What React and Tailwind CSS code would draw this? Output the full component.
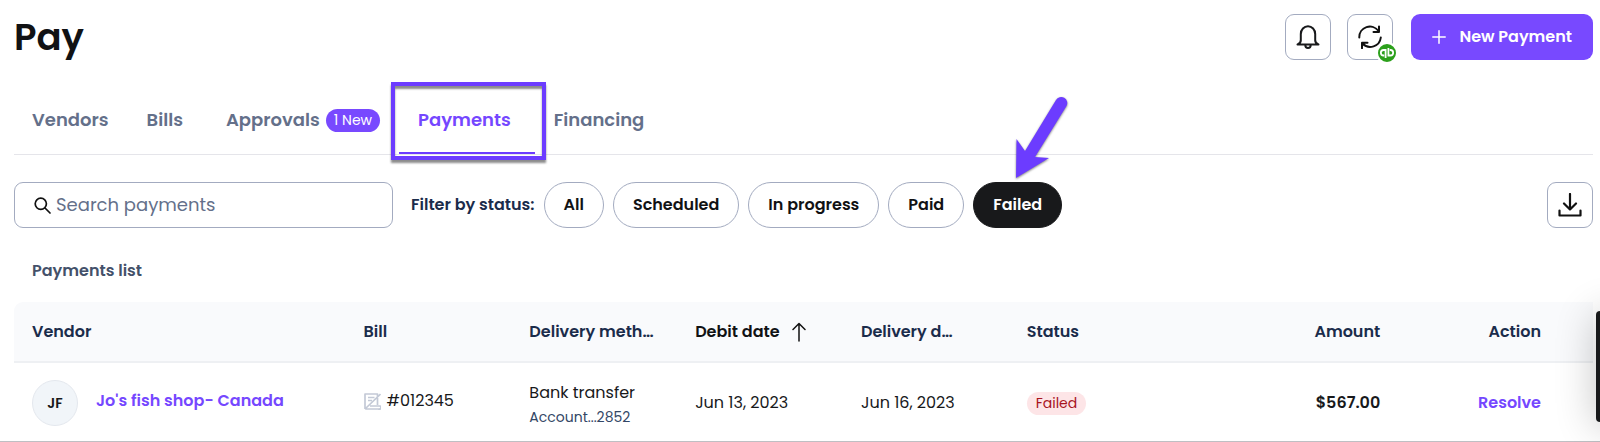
const TABS = [
  { label: 'Vendors', cls: 'pl-[18px] pr-[19px]' },
  { label: 'Bills', cls: 'px-[19px]' },
  { label: 'Approvals', badge: '1 New', cls: 'pl-[24px] pr-[19px]' },
  { label: 'Payments', active: true, cls: 'pl-[19px] pr-[24px]' },
  { label: 'Financing', cls: 'px-[19px]' }
];

const FILTERS = ['All', 'Scheduled', 'In progress', 'Paid', 'Failed'];

const PAYMENTS = [
  {
    initials: 'JF',
    vendor: "Jo's fish shop- Canada",
    bill: '#012345',
    method: 'Bank transfer',
    account: 'Account...2852',
    debit: 'Jun 13, 2023',
    delivery: 'Jun 16, 2023',
    status: 'Failed',
    amount: '$567.00'
  }
];

function BellIcon() {
  return (
    <svg viewBox="0 0 24 24" className="w-6 h-6" fill="none" stroke="#18191b" strokeWidth="2" strokeLinecap="round" strokeLinejoin="round">
      <path d="M1.500 19.500H22.500M4.800 16V9A7.200 7.700 0 0 1 19.200 9V16M4.800 15Q4.800 18.500 1.500 19.500M19.200 15Q19.200 18.500 22.500 19.500M9.300 20a2.700 3 0 0 0 5.400 0" />
    </svg>
  );
}

function SyncIcon() {
  return (
    <svg viewBox="0 0 24 24" className="w-6 h-6" fill="none" stroke="#111" strokeWidth="2" strokeLinecap="round" strokeLinejoin="round">
      <path d="M1.300 12.500A10.600 10.600 0 0 1 20.500 6M21 1.500V7H15.500M22.800 12.500A10.600 10.600 0 0 1 4.500 18.500M4 23.200V17.800H9.500" />
    </svg>
  );
}

function QuickbooksBadge() {
  return (
    <svg viewBox="0 0 22 22" className="absolute -right-[6px] -bottom-[5px] w-[22px] h-[22px]" fill="none" stroke="#fff" strokeWidth="1.800">
      <circle cx="11" cy="11" r="10" fill="#2ca01c" strokeWidth="2" />
      <path d="M9.600 16V8H7.600a2.700 2.700 0 0 0 0 5.500H8.200M12.400 6V13.500H14.400a2.700 2.700 0 0 0 0-5.500H13.800" />
    </svg>
  );
}

function PlusIcon() {
  return (
    <svg viewBox="0 0 14 14" className="w-[14px] h-[14px]" fill="none" stroke="#fff" strokeWidth="1.500" strokeLinecap="round">
      <path d="M7 0.800V13.200M0.800 7H13.200" />
    </svg>
  );
}

function SearchIcon() {
  return (
    <svg viewBox="0 0 17 17" className="w-[17px] h-[17px] shrink-0" fill="none" stroke="#111" strokeWidth="1.700" strokeLinecap="round">
      <circle cx="6.800" cy="6.800" r="5.600" />
      <path d="M11 11L16 16" />
    </svg>
  );
}

function DownloadIcon() {
  return (
    <svg viewBox="0 0 24 24" className="w-6 h-6" fill="none" stroke="#111" strokeWidth="2.200" strokeLinecap="round" strokeLinejoin="round">
      <path d="M12 1V16.500M6 10.500L12 16.500L18 10.500M1.500 17.500V22.500H22.500V17.500" />
    </svg>
  );
}

function NoBillIcon() {
  return (
    <svg viewBox="0 0 17 17" className="w-[17px] h-[17px] shrink-0" fill="none" stroke="#c3c9d6" strokeWidth="1.700" strokeLinejoin="round">
      <path d="M1 16V1H13.500V12M1 16H14.500A1.500 1.500 0 0 0 16 13H6M4 4.500H10.500M4 7.500H8M16.500 1L1 16" />
    </svg>
  );
}

function SortIcon() {
  return (
    <svg viewBox="0 0 14 20" className="w-[14px] h-[20px] shrink-0" fill="none" stroke="#111" strokeWidth="1.500" strokeLinecap="round" strokeLinejoin="round">
      <path d="M7 19V1.500M1 7.500L7 1.500L13 7.500" />
    </svg>
  );
}

function Pointer() {
  return (
    <svg viewBox="0 0 56 88" className="absolute left-[42px] -top-[90px] w-[56px] h-[88px] drop-shadow-[0_1px_1px_rgba(0,0,0,0.5)]" fill="#6c3cff">
      <path d="M1 86L1.500 47L10 59L41 8A6 6 0 0 1 51.500 14L20 65L34 66Z" />
    </svg>
  );
}

function Tab({ tab }) {
  return (
    <a href="#" className={`relative flex items-center h-[70px] pt-[2px] text-lg font-semibold ${tab.cls} ${tab.active ? 'text-[#7547ff]' : 'text-[#64708a]'}`}>
      {tab.label}
      {tab.badge && (
        <span className="ml-[6px] px-2 h-[23px] leading-[23px] rounded-full bg-[#7849ff] text-white text-sm font-normal">{tab.badge}</span>
      )}
      {tab.active && (
        <>
          <span className="absolute inset-x-0 bottom-0 h-[2px] bg-[#6c3cff]" />
          <span className="absolute -left-2 -right-[11px] -top-[2px] -bottom-[6px] border-4 border-[#6c3cff] shadow-[0_3px_2px_rgba(0,0,0,0.45),inset_0_3px_2px_rgba(0,0,0,0.45)]" />
        </>
      )}
    </a>
  );
}

function Row({ p }) {
  return (
    <tr className="h-[79px] text-base text-[#18191b] [&>td]:pt-[2px]">
      <td className="pl-[18px]">
        <div className="flex items-center">
          <span className="w-[46px] h-[46px] shrink-0 rounded-full border border-[#e4e8ee] bg-[#f1f5f9] flex items-center justify-center text-sm font-semibold">{p.initials}</span>
          <a href="#" className="ml-[18px] pb-1 font-semibold text-[#7547ff]">{p.vendor}</a>
        </div>
      </td>
      <td className="pl-[18px]">
        <div className="flex items-center gap-[6px] pb-1">
          <NoBillIcon />
          {p.bill}
        </div>
      </td>
      <td className="pl-[18px]">
        <div className="pt-1 leading-6">{p.method}</div>
        <div className="text-sm leading-6 text-[#334766]">{p.account}</div>
      </td>
      <td className="pl-[18px]">{p.debit}</td>
      <td className="pl-[18px]">{p.delivery}</td>
      <td className="pl-[18px]">
        <span className="inline-block px-[9px] leading-[23px] rounded-full bg-[#fde5e7] text-[#a8141e] text-sm">{p.status}</span>
      </td>
      <td className="pr-[18px] text-right font-semibold">{p.amount}</td>
      <td className="pr-[52px] text-right">
        <button type="button" className="font-semibold text-[#7547ff]">Resolve</button>
      </td>
    </tr>
  );
}

export default function App() {
  return (
    <div className="relative overflow-hidden bg-white font-[Poppins,Inter,sans-serif]">
      <main className="pl-[14px] pr-[7px]">
        <header className="flex items-center justify-between pt-[14px]">
          <h1 className="text-[37px] leading-[46px] font-semibold text-[#111214]">Pay</h1>
          <div className="flex items-center">
            <button type="button" aria-label="Notifications" className="w-[46px] h-[46px] flex items-center justify-center rounded-[9px] border border-[#a3abc0]">
              <BellIcon />
            </button>
            <button type="button" aria-label="Sync" className="relative ml-4 w-[46px] h-[46px] flex items-center justify-center rounded-[9px] border border-[#a3abc0]">
              <SyncIcon />
              <QuickbooksBadge />
            </button>
            <button type="button" className="ml-[18px] h-[46px] px-[21px] flex items-center gap-[13px] rounded-[9px] bg-[#7849ff] text-white text-base font-semibold">
              <PlusIcon />
              New Payment
            </button>
          </div>
        </header>

        <nav className="mt-[24px] flex border-b border-[#e5e5ea]">
          {TABS.map(t => <Tab key={t.label} tab={t} />)}
        </nav>

        {/* Search and status filters */}
        <div className="mt-[27px] flex items-center">
          <label className="w-[379px] h-[46px] flex items-center pl-[19px] gap-[5px] rounded-[9px] border border-[#a3abc0]">
            <SearchIcon />
            <input type="text" aria-label="Search payments" placeholder="Search payments" className="flex-1 min-w-0 outline-none text-lg placeholder:text-[#64708a]" />
          </label>
          <span className="ml-[18px] mr-[9px] text-base font-semibold text-[#1b2c4b]">Filter by status:</span>
          <div className="flex gap-[9px]">
            {FILTERS.map(f => (
              <div key={f} className="relative">
                <button
                  type="button"
                  className={`h-[46px] px-[19px] rounded-full border text-base font-semibold ${f === 'Failed' ? 'bg-[#18191b] border-[#18191b] text-white' : 'border-[#a3abc0] text-[#111214]'}`}
                >
                  {f}
                </button>
                {f === 'Failed' && <Pointer />}
              </div>
            ))}
          </div>
          <button type="button" aria-label="Download" className="ml-auto w-[46px] h-[46px] flex items-center justify-center rounded-[9px] border border-[#a3abc0]">
            <DownloadIcon />
          </button>
        </div>

        <h2 className="mt-[31px] mb-[19px] ml-[18px] text-base leading-6 font-semibold text-[#44516a]">Payments list</h2>
      </main>

      <div className="pl-[14px] pr-[7px] border-b border-[#bfbfc3]">
        <table className="w-full table-fixed border-collapse">
          <thead>
            <tr className="h-[60px] border-b-2 border-[#eef0f3] text-left text-base text-[#1b2c4b] [&>th]:bg-[#f9fafc] [&>th]:font-semibold">
              <th className="w-[21%] pl-[18px] rounded-tl-[9px]">Vendor</th>
              <th className="w-[10.5%] pl-[18px]">Bill</th>
              <th className="w-[10.5%] pl-[18px] pr-[18px] truncate">Delivery method</th>
              <th className="w-[10.5%] pl-[18px] text-[#111214]">
                <span className="flex items-center gap-3">
                  Debit date
                  <SortIcon />
                </span>
              </th>
              <th className="w-[10.5%] pl-[18px] pr-[52px] truncate">Delivery date</th>
              <th className="pl-[18px]">Status</th>
              <th className="pr-[18px] text-right">Amount</th>
              <th className="pr-[52px] text-right">Action</th>
            </tr>
          </thead>
          <tbody>
            {PAYMENTS.map(p => <Row key={p.bill} p={p} />)}
          </tbody>
        </table>
      </div>

      {/* Docked help widget, mostly off the right edge */}
      <div className="absolute -right-[44px] bottom-[20px] w-12 h-[111px] rounded-sm bg-[#18191b] shadow-[0_4px_40px_rgba(0,0,0,0.24)]" />
    </div>
  );
}
